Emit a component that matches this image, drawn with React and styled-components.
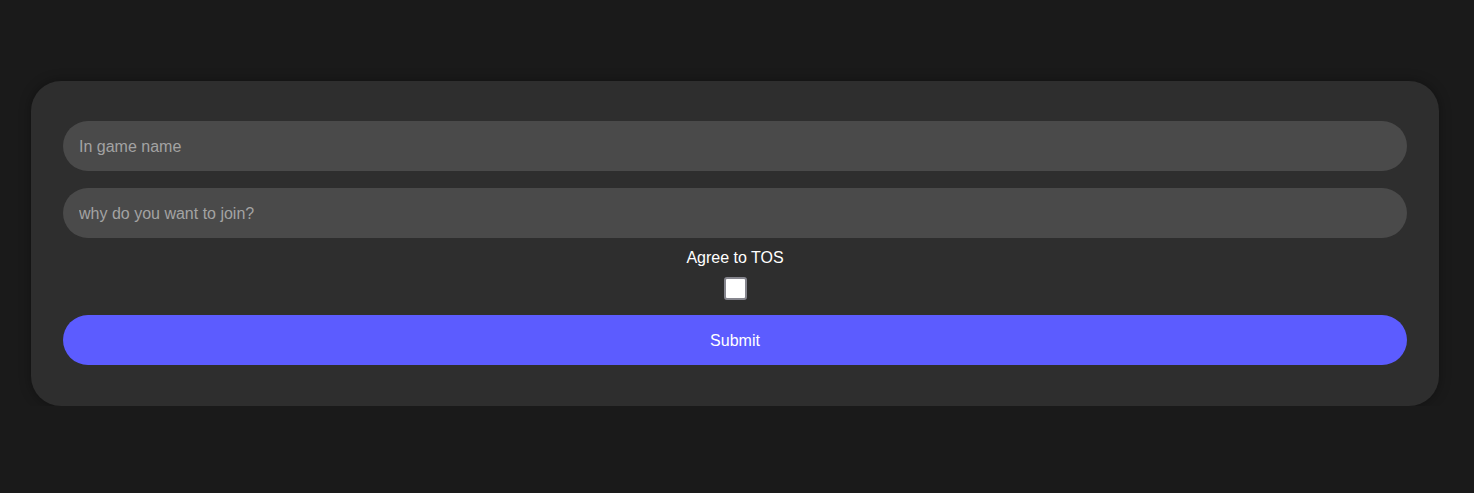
import styled, { createGlobalStyle } from "styled-components";

const Global = createGlobalStyle`
  html, body {
    margin: 0;
    background: #1a1a1a;
    font-family: "Liberation Sans", Arial, sans-serif;
  }
`;

const Page = styled.main`
  padding: 81px 35px 0 31px;
`;

const Card = styled.form`
  background: #2e2e2e;
  border-radius: 30px;
  box-shadow: 0 0 12px rgba(0, 0, 0, 0.35);
  padding: 40px 32px 41px;
  display: flex;
  flex-direction: column;
`;

const Field = styled.input`
  box-sizing: border-box;
  height: 50px;
  border: none;
  border-radius: 25px;
  background: #4a4a4a;
  color: #e6e6e6;
  padding: 2px 16px 0;
  font-family: inherit;
  font-size: 16px;
  outline: none;
  margin-bottom: ${(p) => p.$gap || 0}px;
  &::placeholder {
    color: #a3a3a3;
  }
`;

const Label = styled.label`
  display: flex;
  flex-direction: column;
  align-items: center;
  color: #ffffff;
  font-size: 16px;
  line-height: 18px;
  margin-top: 11px;
`;

const Check = styled.input`
  appearance: none;
  margin: 10px 0 0;
  width: 23px;
  height: 23px;
  background: #ffffff;
  border: 2px solid #85858d;
  border-radius: 3px;
  box-sizing: border-box;
  &:checked {
    background: #5c5cff;
  }
`;

const Submit = styled.button`
  box-sizing: border-box;
  margin-top: 15px;
  height: 50px;
  border: none;
  border-radius: 25px;
  background: #5c5cff;
  color: #ffffff;
  font-family: inherit;
  font-size: 16px;
  padding: 2px 0 0;
  cursor: pointer;
`;

export default function App() {
  return (
    <>
      <Global />
      <Page>
        <Card onSubmit={(e) => e.preventDefault()}>
          <Field placeholder="In game name" $gap={17} />
          <Field placeholder="why do you want to join?" />
          <Label>
            Agree to TOS
            <Check type="checkbox" />
          </Label>
          <Submit type="submit">Submit</Submit>
        </Card>
      </Page>
    </>
  );
}
